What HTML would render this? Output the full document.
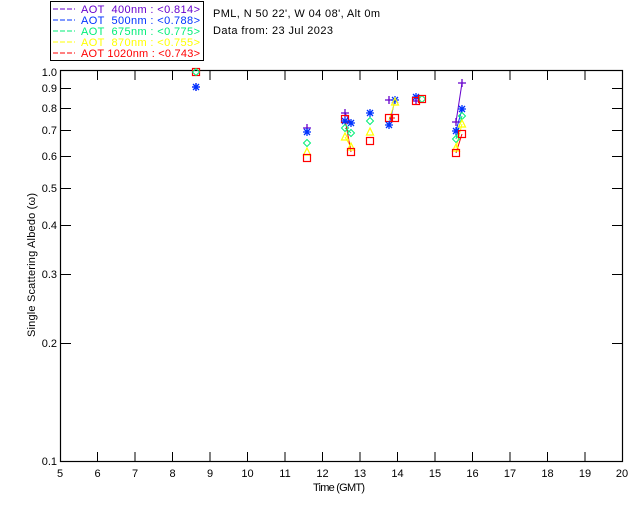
<!DOCTYPE html>
<html><head><style>
html,body{margin:0;padding:0;background:#fff;}
svg{display:block;font-family:"Liberation Sans","DejaVu Sans",sans-serif;}
</style></head><body>
<svg width="640" height="512" viewBox="0 0 640 512" xmlns="http://www.w3.org/2000/svg">
<rect width="640" height="512" fill="#fff"/>
<rect x="50.5" y="1.5" width="153" height="59" fill="#fff" stroke="#000" stroke-width="1"/>
<g font-size="11">
<line x1="53" y1="9" x2="75" y2="9" stroke="#6600cc" stroke-dasharray="5,2"/>
<text x="81" y="13" fill="#6600cc" textLength="119" lengthAdjust="spacing" xml:space="preserve">AOT  400nm : &lt;0.814&gt;</text>
<line x1="53" y1="20" x2="75" y2="20" stroke="#0033ff" stroke-dasharray="5,2"/>
<text x="81" y="24" fill="#0033ff" textLength="119" lengthAdjust="spacing" xml:space="preserve">AOT  500nm : &lt;0.788&gt;</text>
<line x1="53" y1="31" x2="75" y2="31" stroke="#00ee77" stroke-dasharray="5,2"/>
<text x="81" y="35" fill="#00ee77" textLength="119" lengthAdjust="spacing" xml:space="preserve">AOT  675nm : &lt;0.775&gt;</text>
<line x1="53" y1="42" x2="75" y2="42" stroke="#ffff00" stroke-dasharray="5,2"/>
<text x="81" y="46" fill="#ffff00" textLength="119" lengthAdjust="spacing" xml:space="preserve">AOT  870nm : &lt;0.755&gt;</text>
<line x1="53" y1="53" x2="75" y2="53" stroke="#ff0000" stroke-dasharray="5,2"/>
<text x="81" y="57" fill="#ff0000" textLength="119" lengthAdjust="spacing" xml:space="preserve">AOT 1020nm : &lt;0.743&gt;</text>
</g>
<text x="213" y="17" font-size="11" textLength="167" lengthAdjust="spacing">PML, N 50 22', W 04 08', Alt 0m</text>
<text x="213" y="34" font-size="11" textLength="120" lengthAdjust="spacing">Data from: 23 Jul 2023</text>
<rect x="60.5" y="70.5" width="562" height="391" fill="none" stroke="#000" stroke-width="1.2"/>
<g stroke="#000" stroke-width="1">
<path d="M97.5 461v-9M97.5 71v9M135 461v-9M135 71v9M172.5 461v-9M172.5 71v9M210 461v-9M210 71v9M247.5 461v-9M247.5 71v9M285 461v-9M285 71v9M322.5 461v-9M322.5 71v9M360 461v-9M360 71v9M397.5 461v-9M397.5 71v9M435 461v-9M435 71v9M472.5 461v-9M472.5 71v9M510 461v-9M510 71v9M547.5 461v-9M547.5 71v9M585 461v-9M585 71v9"/>
<path d="M61 88.5h10M612 88.5h10M61 108.5h10M612 108.5h10M61 130.5h10M612 130.5h10M61 156.5h10M612 156.5h10M61 188.5h10M612 188.5h10M61 225.5h10M612 225.5h10M61 274.5h10M612 274.5h10M61 343.5h10M612 343.5h10"/>
</g>
<g font-size="11" text-anchor="end">
<text x="57" y="76">1.0</text><text x="57" y="92">0.9</text><text x="57" y="112">0.8</text>
<text x="57" y="134">0.7</text><text x="57" y="160">0.6</text><text x="57" y="192">0.5</text>
<text x="57" y="229">0.4</text><text x="57" y="278">0.3</text><text x="57" y="347">0.2</text>
<text x="57" y="465">0.1</text>
</g>
<g font-size="11" text-anchor="middle">
<text x="60" y="477">5</text><text x="97.5" y="477">6</text><text x="135" y="477">7</text><text x="172.5" y="477">8</text>
<text x="210" y="477">9</text><text x="247.5" y="477">10</text><text x="285" y="477">11</text><text x="322.5" y="477">12</text>
<text x="360" y="477">13</text><text x="397.5" y="477">14</text><text x="435" y="477">15</text><text x="472.5" y="477">16</text>
<text x="510" y="477">17</text><text x="547.5" y="477">18</text><text x="585" y="477">19</text><text x="622" y="477">20</text>
</g>
<text x="313" y="491" font-size="11" textLength="52" lengthAdjust="spacing">Time (GMT)</text>
<text transform="translate(35,337) rotate(-90)" font-size="11" textLength="144" lengthAdjust="spacing">Single Scattering Albedo (ω)</text>
<defs>
<g id="p"><path d="M-4 0h8M0 -4v8" stroke="#6600cc" stroke-width="1.3" fill="none"/></g>
<g id="s"><path d="M-4 0h8M0 -4v8M-3 -3l6 6M-3 3l6 -6" stroke="#0033ff" stroke-width="1.3" fill="none"/></g>
<g id="d"><path d="M0 -3.5L3.5 0L0 3.5L-3.5 0Z" stroke="#00ee77" stroke-width="1" fill="none"/></g>
<g id="t"><path d="M0 -4L3.5 3H-3.5Z" stroke="#ffff00" stroke-width="1.2" fill="none"/></g>
<g id="q"><rect x="-3.5" y="-3.5" width="7" height="7" stroke="#ff0000" stroke-width="1.2" fill="none"/></g>
</defs>
<g stroke-width="1" fill="none">
<path d="M345 113L351 123" stroke="#6600cc"/><path d="M345 121L351 123" stroke="#0033ff"/>
<path d="M345 128L351 133" stroke="#00ee77"/><path d="M345 137L351 147" stroke="#ffff00"/><path d="M345 119L351 152" stroke="#ff0000"/>
<path d="M389 100L395 100" stroke="#6600cc"/><path d="M389 125L395 100" stroke="#0033ff"/><path d="M389 120L395 102" stroke="#ffff00"/><path d="M389 118L395 118" stroke="#ff0000"/>
<path d="M456 122L462 83" stroke="#6600cc"/><path d="M456 131L462 109" stroke="#0033ff"/><path d="M456 139L462 116" stroke="#00ee77"/><path d="M456 148L462 124" stroke="#ffff00"/><path d="M456 153L462 134" stroke="#ff0000"/>
</g>
<use href="#q" x="196" y="72"/><use href="#d" x="196" y="72"/><use href="#p" x="196" y="87"/><use href="#s" x="196" y="87"/>
<use href="#p" x="307" y="128"/><use href="#s" x="307" y="132"/><use href="#d" x="307" y="143"/><use href="#t" x="307" y="152"/><use href="#q" x="307" y="158"/>
<use href="#p" x="345" y="113"/><use href="#q" x="345" y="119"/><use href="#s" x="345" y="121"/><use href="#d" x="345" y="128"/><use href="#t" x="345" y="137"/>
<use href="#s" x="351" y="123"/><use href="#d" x="351" y="133"/><use href="#t" x="351" y="147"/><use href="#q" x="351" y="152"/>
<use href="#s" x="370" y="113"/><use href="#d" x="370" y="121"/><use href="#t" x="370" y="132"/><use href="#q" x="370" y="141"/>
<use href="#p" x="389" y="100"/><use href="#q" x="389" y="118"/><use href="#s" x="389" y="125"/>
<use href="#s" x="395" y="100"/><use href="#t" x="395" y="102"/><use href="#q" x="395" y="118"/>
<use href="#s" x="416" y="97"/><use href="#p" x="416" y="101"/><use href="#q" x="416" y="101"/><use href="#d" x="422" y="99"/><use href="#q" x="422" y="99"/>
<use href="#p" x="456" y="122"/><use href="#s" x="456" y="131"/><use href="#d" x="456" y="139"/><use href="#t" x="456" y="148"/><use href="#q" x="456" y="153"/>
<use href="#p" x="462" y="83"/><use href="#s" x="462" y="109"/><use href="#d" x="462" y="116"/><use href="#t" x="462" y="124"/><use href="#q" x="462" y="134"/>
</svg>
</body></html>
